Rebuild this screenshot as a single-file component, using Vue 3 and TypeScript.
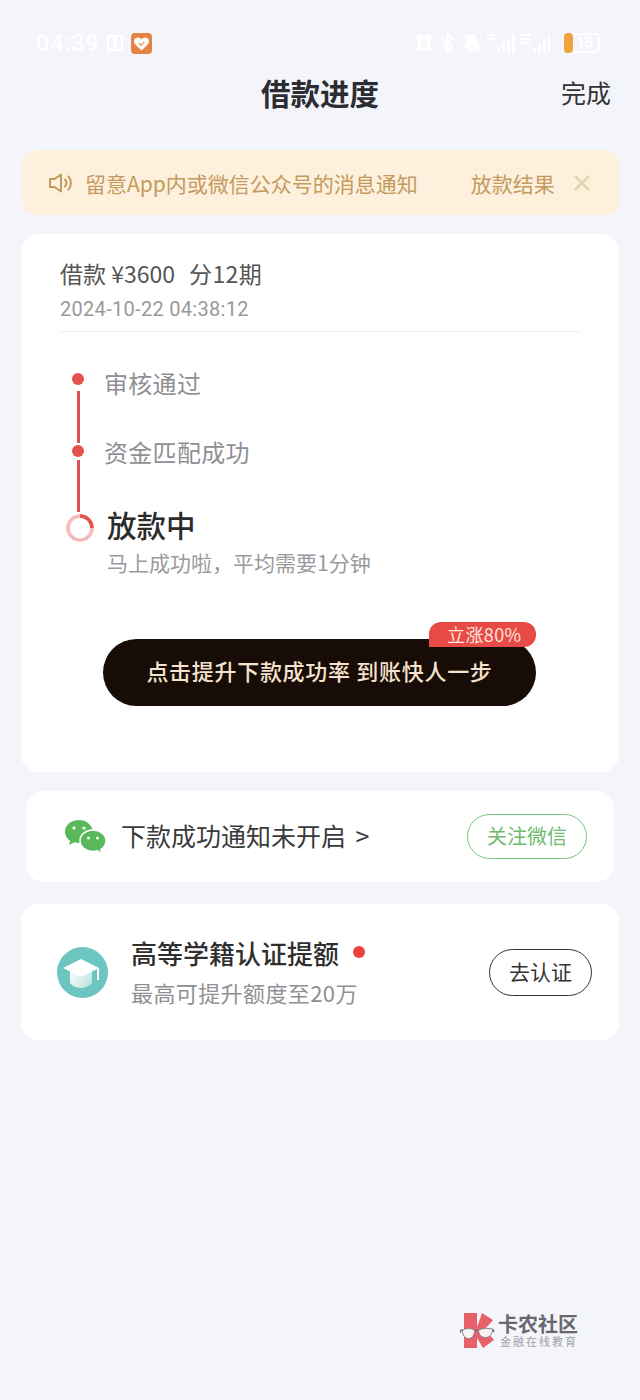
<script setup lang="ts">
const steps: string[] = ['审核通过', '资金匹配成功']
</script>

<template>
  <div class="page">
    <header class="status">
      <div class="status-left">
        <span class="clock">04:39</span>
        <svg class="nfc" width="20" height="18" viewBox="0 0 20 18">
          <path d="M3 2h6v14H3zM11 2h6v14h-6z" fill="none" stroke="#fff" stroke-width="2.400" />
        </svg>
        <svg class="app-icon" width="21" height="21" viewBox="0 0 21 21">
          <rect width="21" height="21" rx="4" fill="#e38445" />
          <path d="M10.500 17.500 4 11c-2-2.600-.8-6.500 2.800-6.500 1.600 0 2.900.8 3.700 2 .8-1.200 2.100-2 3.700-2 3.600 0 4.800 3.900 2.800 6.500z" fill="#fff" />
          <path d="m7.800 10 2.300 2.400 3-3.400" fill="none" stroke="#e9a468" stroke-width="1.500" />
        </svg>
      </div>
      <div class="status-right">
        <svg width="20" height="20" viewBox="0 0 20 20">
          <path d="M2 2h16l-2 6 2 10H2l2-10z" fill="#fff" />
          <path d="M7 6h6v8H7z" fill="#f3f5fb" opacity=".6" />
        </svg>
        <svg width="18" height="20" viewBox="0 0 18 20">
          <path d="m3 5 10 10-5 4V1l5 4L3 15" fill="none" stroke="#fff" stroke-width="2.400" />
        </svg>
        <svg width="20" height="20" viewBox="0 0 20 20">
          <path d="M10 2c4 0 5 3 5 6v4l3 3H2l3-3V8c0-3 1-6 5-6zM7 17h6l-3 2zM2 2l16 16" fill="#fff" stroke="#fff" stroke-width="1.500" />
        </svg>
        <svg width="28" height="20" viewBox="0 0 28 20">
          <path d="M0 1h8v2H0zM0 5h8v2H0zM10 14h3v6h-3zM15 10h3v10h-3zM20 6h3v14h-3zM25 2h3v18h-3z" fill="#fff" />
        </svg>
        <svg width="30" height="20" viewBox="0 0 30 20">
          <path d="M0 1h11v2H0zM0 5h11v2H0zM0 9h11v2H0zM13 15h3v5h-3zM18 11h3v9h-3zM23 7h3v13h-3zM28 3h2v17h-2z" fill="#fff" />
        </svg>
        <div class="battery">
          <span class="battery-fill"></span>
          <span class="battery-num">15</span>
        </div>
      </div>
    </header>

    <nav class="nav">
      <span></span>
      <h1 class="title">借款进度</h1>
      <span class="done">完成</span>
    </nav>

    <section class="notice">
      <svg class="speaker" width="26" height="22" viewBox="0 0 26 22">
        <path d="M2 7h4.500L13 2.500v17L6.500 15H2z" fill="none" stroke="#c59a5f" stroke-width="2" stroke-linejoin="round" />
        <path d="M17 7.500c1.700 2 1.700 5 0 7M20.500 4.500c3.200 3.500 3.200 9.500 0 13" fill="none" stroke="#c59a5f" stroke-width="2" stroke-linecap="round" />
      </svg>
      <div class="marquee">
        <span>留意App内或微信公众号的消息通知</span>
        <span>放款结果&#xFF1A;</span>
      </div>
      <svg class="close" width="18" height="18" viewBox="0 0 18 18">
        <path d="m2 2 14 14M16 2 2 16" stroke="#e3d3b0" stroke-width="2.600" fill="none" />
      </svg>
    </section>

    <section class="card progress">
      <div class="loan">借款 ¥3600<span class="loan-term">分12期</span></div>
      <div class="time">2024-10-22 04:38:12</div>
      <div class="divider"></div>

      <div class="timeline">
        <div v-for="(s, i) in steps" :key="s" class="step" :class="`step-${i}`">
          <div class="marker">
            <span class="dot"></span>
            <span class="line"></span>
          </div>
          <span class="step-text">{{ s }}</span>
        </div>
        <div class="step current">
          <div class="marker">
            <svg class="ring" width="28" height="28" viewBox="0 0 28 28">
              <circle cx="14" cy="14" r="12" fill="none" stroke="#f3bcbc" stroke-width="3.500" />
              <path d="M14 2a12 12 0 0 1 12 12" fill="none" stroke="#e5524c" stroke-width="3.500" />
            </svg>
          </div>
          <div class="current-body">
            <div class="current-title">放款中</div>
            <div class="current-sub">马上成功啦&#xFF0C;平均需要1分钟</div>
          </div>
        </div>
      </div>

      <div class="cta">
        <span class="cta-text">点击提升下款成功率&nbsp;到账快人一步</span>
        <span class="badge">立涨80%</span>
      </div>
    </section>

    <section class="card wechat">
      <svg class="wechat-icon" width="42" height="36" viewBox="0 0 42 36">
        <path d="M15 1C6.700 1 1 6.400 1 13c0 3.700 2 6.900 5.300 9.100L5 26l5.300-2.800c1.500.5 3 .8 4.700.8 8.300 0 14-5.400 14-11S23.300 1 15 1z" fill="#59b95a" />
        <path d="M29 11c-7.200 0-13 4.800-13 10.700S21.800 32.400 29 32.400c1.600 0 3.100-.2 4.500-.6L38 35l-1.100-4.500c3.100-2 5.100-5.200 5.100-8.800C42 15.800 36.200 11 29 11z" fill="#59b95a" stroke="#fff" stroke-width="1.500" />
        <circle cx="10" cy="9" r="1.600" fill="#fff" />
        <circle cx="20" cy="9" r="1.600" fill="#fff" />
        <circle cx="24.500" cy="19" r="1.500" fill="#fff" />
        <circle cx="33.500" cy="19" r="1.500" fill="#fff" />
      </svg>
      <span class="wechat-text">下款成功通知未开启 &gt;</span>
      <span class="follow">关注微信</span>
    </section>

    <section class="card cert">
      <svg class="cert-icon" width="51" height="51" viewBox="0 0 51 51">
        <defs>
          <linearGradient id="capBody" x1="0" y1="0" x2="1" y2="0.600">
            <stop offset="0" stop-color="#ffffff" />
            <stop offset="1" stop-color="#bfe6e0" />
          </linearGradient>
        </defs>
        <circle cx="25.500" cy="25.500" r="25.500" fill="#6cc5bf" />
        <path d="M13 22v14c3 3.500 7 5 11 5s8-1.500 11-5V22z" fill="url(#capBody)" />
        <path d="M24 12 6 21l18 9 18-9z" fill="#fff" />
        <path d="M41 21v12" stroke="#fff" stroke-width="2" />
      </svg>
      <div class="cert-body">
        <div class="cert-title">高等学籍认证提额<span class="red-dot"></span></div>
        <div class="cert-sub">最高可提升额度至20万</div>
      </div>
      <span class="go">去认证</span>
    </section>

    <aside class="watermark">
      <svg width="36" height="36" viewBox="0 0 36 36">
        <path d="M4 1h13v14L22 1l11 7-8 9 9 11-11 8-6-10v10H4z" fill="#e8606a" />
        <path d="M2.500 18c4-2 8-2 12 0 0 5-2 8.500-6 8.500s-6-3.500-6-8.500zM18.500 18c5-2 9-2 14-1 0 5-3 8.500-7 8.500s-7-3-7-7.500z" fill="#f8f4f4" stroke="#85858a" stroke-width="1" />
        <path d="M0 21c0-2 1-3 2.500-3M14.500 18c1.500 1 2.500 1 4 0M32.500 17l1.500 3" fill="none" stroke="#6d6d72" stroke-width="1.500" />
      </svg>
      <div class="wm-text">
        <div class="wm-name">卡农社区</div>
        <div class="wm-sub">金融在线教育</div>
      </div>
    </aside>
  </div>
</template>

<style scoped>
.page {
  position: relative;
  width: 640px;
  height: 1400px;
  background: #f3f5fb;
  overflow: hidden;
  font-family: "Noto Sans CJK SC", "Noto Sans", sans-serif;
  color: #333;
}
.status {
  height: 66px;
  box-sizing: border-box;
  padding: 20px 40px 0 36px;
  display: flex;
  justify-content: space-between;
  align-items: flex-start;
}
.status-left,
.status-right {
  display: flex;
  align-items: center;
  height: 46px;
}
.status-left {
  gap: 6px;
}
.clock {
  font-family: Roboto, sans-serif;
  font-size: 23px;
  letter-spacing: 1px;
  color: #fff;
  font-weight: 500;
}
.status-right {
  gap: 5px;
}
.battery {
  position: relative;
  width: 36px;
  height: 20px;
  margin-left: 9px;
  border: 2px solid #fff;
  border-radius: 5px;
  box-sizing: border-box;
  display: flex;
  align-items: center;
}
.battery-fill {
  position: absolute;
  left: -2px;
  top: -2px;
  width: 9px;
  height: 20px;
  border-radius: 4px;
  background: #eea33c;
}
.battery-num {
  margin-left: 10px;
  color: #fff;
  font: 500 15px Roboto, sans-serif;
}
.nav {
  height: 54px;
  box-sizing: border-box;
  padding: 0 29px 3px;
  display: grid;
  grid-template-columns: 1fr auto 1fr;
  align-items: center;
}
.title {
  margin: 0;
  font-size: 29.500px;
  font-weight: 700;
  color: #2b2d33;
}
.done {
  justify-self: end;
  font-size: 25px;
  color: #333;
}
.notice {
  margin: 30px 21px 0 22px;
  height: 65px;
  border-radius: 14px;
  background: #fdf0dc;
  display: flex;
  align-items: center;
  padding: 0 28px 0 26px;
  color: #c59a5f;
}
.speaker {
  flex: none;
}
.marquee {
  margin-left: 11px;
  width: 471px;
  overflow: hidden;
  white-space: nowrap;
  display: flex;
  gap: 53px;
  font-size: 21px;
  flex: none;
}
.close {
  margin-left: 17px;
  flex: none;
}
.card {
  background: #fff;
  border-radius: 18px;
}
.progress {
  margin: 19px 21px 0;
  padding: 22px 39px 0;
  height: 538px;
  box-sizing: border-box;
}
.loan {
  font-size: 23px;
  line-height: 34px;
  color: #555;
}
.loan-term {
  margin-left: 14px;
  letter-spacing: 0.4px;
}
.time {
  font-family: Roboto, sans-serif;
  font-size: 20px;
  line-height: 26px;
  letter-spacing: 0.3px;
  color: #999;
  margin-top: 6px;
}
.divider {
  margin-top: 9px;
  height: 1px;
  background: #f0f0f0;
}
.timeline {
  padding-top: 41px;
}
.step {
  display: flex;
  align-items: flex-start;
}
.marker {
  width: 36px;
  flex: none;
  display: flex;
  flex-direction: column;
  align-items: center;
}
.dot {
  width: 12px;
  height: 12px;
  border-radius: 50%;
  background: #e5524c;
}
.line {
  width: 3px;
  height: 52px;
  margin: 6px 0 2px;
  background: #d9534f;
}
.step-1 .line {
  margin: 3px 0 2px;
}
.step-text {
  margin-left: 8px;
  font-size: 24px;
  line-height: 20px;
  letter-spacing: 0.3px;
  color: #8f8f94;
}
.step-1 .step-text {
  line-height: 14px;
}
.current .ring {
  margin-left: 4px;
}
.current-body {
  margin: -4px 0 0 11px;
}
.current-title {
  font-size: 29.500px;
  font-weight: 500;
  line-height: 28px;
  color: #2b2b2b;
}
.current-sub {
  margin-top: 9px;
  font-size: 21px;
  line-height: 30px;
  color: #9a9a9e;
}
.cta {
  position: relative;
  margin: 62px 44px 0 43px;
  height: 67px;
  box-sizing: border-box;
  padding-bottom: 6px;
  border-radius: 34px;
  background: #170c06;
  display: flex;
  align-items: center;
  justify-content: center;
}
.cta-text {
  font-size: 22px;
  font-weight: 500;
  letter-spacing: 0.7px;
  color: #f6e2cc;
}
.badge {
  position: absolute;
  right: 0;
  top: -17px;
  width: 107px;
  height: 25px;
  box-sizing: border-box;
  padding: 0 14px 0 18px;
  border-radius: 12px 12px 12px 0;
  background: #e84b45;
  color: #fde4df;
  font-size: 18px;
  line-height: 25px;
  letter-spacing: 0.4px;
  white-space: nowrap;
}
.wechat {
  margin: 19px 26px 0;
  height: 91px;
  display: flex;
  align-items: center;
  padding: 0 27px 0 38px;
}
.wechat-icon {
  flex: none;
}
.wechat-text {
  margin: -4px 0 0 15px;
  font-size: 25px;
  word-spacing: 4px;
  color: #3a3a3a;
}
.follow {
  margin-left: auto;
  width: 120px;
  height: 45px;
  box-sizing: border-box;
  padding-bottom: 2px;
  border: 1px solid #7ac77e;
  border-radius: 23px;
  color: #6cbb70;
  font-size: 20px;
  display: flex;
  align-items: center;
  justify-content: center;
}
.cert {
  margin: 22px 21px 0;
  height: 136px;
  display: flex;
  align-items: center;
  padding: 0 27px 0 36px;
}
.cert-icon {
  flex: none;
}
.cert-body {
  margin: 2px 0 0 23px;
}
.cert-title {
  font-size: 26px;
  font-weight: 500;
  line-height: 38px;
  color: #2f2f2f;
  display: flex;
  align-items: center;
}
.red-dot {
  width: 12px;
  height: 12px;
  border-radius: 50%;
  margin: -2px 0 0 14px;
  background: #e8443c;
}
.cert-sub {
  font-size: 22px;
  line-height: 40px;
  letter-spacing: 0.4px;
  color: #909094;
}
.go {
  margin-left: auto;
  width: 103px;
  height: 47px;
  box-sizing: border-box;
  padding-bottom: 2px;
  border: 1px solid #333;
  border-radius: 24px;
  font-size: 21px;
  color: #333;
  display: flex;
  align-items: center;
  justify-content: center;
}
.watermark {
  position: absolute;
  left: 460px;
  top: 1312px;
  display: flex;
  align-items: center;
  gap: 2px;
}
.wm-name {
  font-size: 20px;
  font-weight: 700;
  line-height: 22px;
  color: #67676d;
}
.wm-sub {
  margin-left: 2px;
  font-size: 11px;
  line-height: 13px;
  letter-spacing: 2px;
  color: #a0a0a4;
}
</style>
